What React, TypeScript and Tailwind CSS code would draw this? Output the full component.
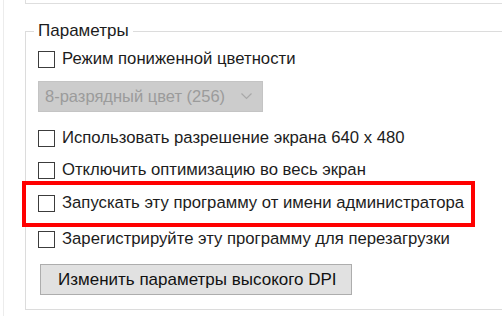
const font = { fontFamily: '"Liberation Sans", Arial, sans-serif' };

function Box() {
  return <span className="w-[17px] h-[17px] shrink-0 border-[1.5px] border-[#3c3c3c] bg-white" />;
}

function Row({ label, className = "" }: { label: string; className?: string }) {
  return (
    <div className={`flex items-center gap-[7px] h-[24px] ${className}`}>
      <Box />
      <span className="text-[16.7px] leading-none text-[#1c1c1c] whitespace-nowrap">{label}</span>
    </div>
  );
}

export default function App() {
  return (
    <div className="w-[502px] h-[316px] overflow-hidden bg-white" style={font}>
      <div className="ml-[3px] h-full border-l border-[#ececec] pl-[21px]">
        <div className="h-[4px] w-[600px] border-l border-b border-[#dedede]" />
        <fieldset className="mt-[17px] w-[600px] border border-[#dcdcdc] px-[12px] pb-[14px]">
          <legend className="ml-[-4px] px-[4px] text-[17px] leading-[20px] text-[#1c1c1c]">Параметры</legend>
          <div className="pt-[6px]">
            <Row label="Режим пониженной цветности" />
            <div className="mt-[10px] w-[225px] h-[31px] flex items-center justify-between bg-[#cccccc] border border-[#c4c4c4] pl-[6px] pr-[10px]">
              <span className="text-[16.5px] leading-none text-[#9b9b9b] whitespace-nowrap">8-разрядный цвет (256)</span>
              <svg width="11" height="7" viewBox="0 0 11 7" fill="none">
                <path d="M0.5 0.5 L5.5 5.5 L10.5 0.5" stroke="#a8a8a8" strokeWidth="1.2" />
              </svg>
            </div>
            <Row className="mt-[14px]" label="Использовать разрешение экрана 640 x 480" />
            <Row className="mt-[8px]" label="Отключить оптимизацию во весь экран" />
            <div className="relative mt-[9.5px]">
              <Row label="Запускать эту программу от имени администратора" />
              <div className="pointer-events-none absolute left-[-16px] top-[-11px] w-[453px] h-[46px] border-[4px] border-[#ff0000]" />
            </div>
            <Row className="mt-[12px]" label="Зарегистрируйте эту программу для перезагрузки" />
            <button className="mt-[12.5px] ml-[2px] w-[312px] h-[31px] flex items-center pl-[17px] bg-[#e1e1e1] border border-[#adadad] text-[17px] leading-none text-[#111] whitespace-nowrap">
              Изменить параметры высокого DPI
            </button>
          </div>
        </fieldset>
      </div>
    </div>
  );
}
